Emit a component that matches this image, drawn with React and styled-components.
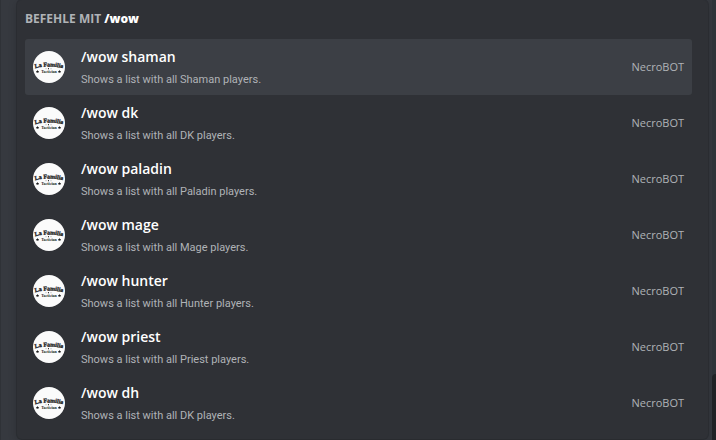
import React from "react";
import styled, { createGlobalStyle } from "styled-components";

const GlobalStyle = createGlobalStyle`
  *, *::before, *::after { box-sizing: border-box; }
  body {
    margin: 0;
    background: #36393f;
    font-family: "Open Sans", "Noto Sans", sans-serif;
    overflow: hidden;
  }
`;

const Chat = styled.main`
  display: flex;
  min-height: 100vh;
  border-left: 1px solid #2f3237;
  background: #36393f;
`;

const Panel = styled.section`
  flex: 1;
  min-width: 0;
  margin: 0 4px 1px 16px;
  padding: 8px 16px 8px 8px;
  background: #2f3136;
  border-radius: 5px;
  box-shadow: 0 0 0 1px rgba(4, 4, 5, 0.15), 0 2px 10px rgba(0, 0, 0, 0.2);
`;

const Heading = styled.h2`
  margin: 0 0 10px;
  padding-top: 1px;
  font-size: 12px;
  line-height: 20px;
  font-weight: 700;
  color: #b0b3b7;
`;

const Query = styled.strong`
  font-weight: 800;
  color: #ffffff;
`;

const CommandList = styled.ul`
  margin: 0;
  padding: 0;
  list-style: none;
`;

const Command = styled.button`
  display: flex;
  align-items: center;
  gap: 16px;
  width: 100%;
  height: 56px;
  padding: 0 8px;
  border: 0;
  border-radius: 3px;
  background: ${({ $selected }) => ($selected ? "#3c3f45" : "transparent")};
  font-family: inherit;
  text-align: left;
  cursor: pointer;
`;

const Avatar = styled.svg`
  flex: none;
  width: 32px;
  height: 32px;
  border-radius: 50%;
`;

const Details = styled.span`
  flex: 1;
  min-width: 0;
  display: flex;
  flex-direction: column;
  gap: 3px;
  padding-top: 3px;
`;

const Name = styled.span`
  font-size: 14px;
  line-height: 20px;
  font-weight: 600;
  color: #ffffff;
`;

const Description = styled.span`
  font-family: Roboto, "Open Sans", sans-serif;
  font-size: 11px;
  line-height: 20px;
  color: #b0b3b7;
`;

const Source = styled.span`
  font-size: 11px;
  line-height: 16px;
  color: #b0b3b7;
`;

const Scrollbar = styled.div`
  flex: none;
  display: flex;
  flex-direction: column;
  width: 4px;
  background: #2e3338;
`;

const ScrollThumb = styled.div`
  margin-top: auto;
  height: 15vh;
  border-radius: 4px 0 0 0;
  background: #202225;
`;

const commands = [
  ["shaman", "Shaman"],
  ["dk", "DK"],
  ["paladin", "Paladin"],
  ["mage", "Mage"],
  ["hunter", "Hunter"],
  ["priest", "Priest"],
  ["dh", "DK"],
];

function BotAvatar({ id }) {
  return (
    <Avatar viewBox="0 0 32 32" aria-hidden="true">
      <defs>
        <path id={id} d="M-4 19 Q16 12 36 19" />
      </defs>
      <rect width="32" height="32" fill="#fbfbfb" />
      <g fill="#191919" fontFamily="Liberation Serif, serif" fontWeight="700">
        <text fontSize="6" textAnchor="middle" stroke="#191919" strokeWidth="0.3">
          <textPath href={`#${id}`} startOffset="50%">La Familia</textPath>
        </text>
        <text x="16" y="22" fontSize="4" textAnchor="middle">Tactician</text>
      </g>
      <g fill="#191919">
        <circle cx="13" cy="17.8" r="0.4" />
        <circle cx="15.5" cy="17.7" r="0.6" />
        <circle cx="18" cy="17.8" r="0.4" />
        <path d="M4.5 19l.5 1 1.1.1-.8.8.2 1.1-1-.5-1 .5.2-1.1-.8-.8 1.1-.1z" />
        <path d="M26.5 19l.5 1 1.1.1-.8.8.2 1.1-1-.5-1 .5.2-1.1-.8-.8 1.1-.1z" />
      </g>
    </Avatar>
  );
}

export default function App() {
  return (
    <>
      <GlobalStyle />
      <Chat>
        <Panel>
          <Heading>
            BEFEHLE MIT <Query>/wow</Query>
          </Heading>
          <CommandList>
            {commands.map(([name, group], index) => (
              <li key={name}>
                <Command type="button" $selected={index === 0}>
                  <BotAvatar id={`arc-${name}`} />
                  <Details>
                    <Name>/wow {name}</Name>
                    <Description>Shows a list with all {group} players.</Description>
                  </Details>
                  <Source>NecroBOT</Source>
                </Command>
              </li>
            ))}
          </CommandList>
        </Panel>
        <Scrollbar>
          <ScrollThumb />
        </Scrollbar>
      </Chat>
    </>
  );
}
